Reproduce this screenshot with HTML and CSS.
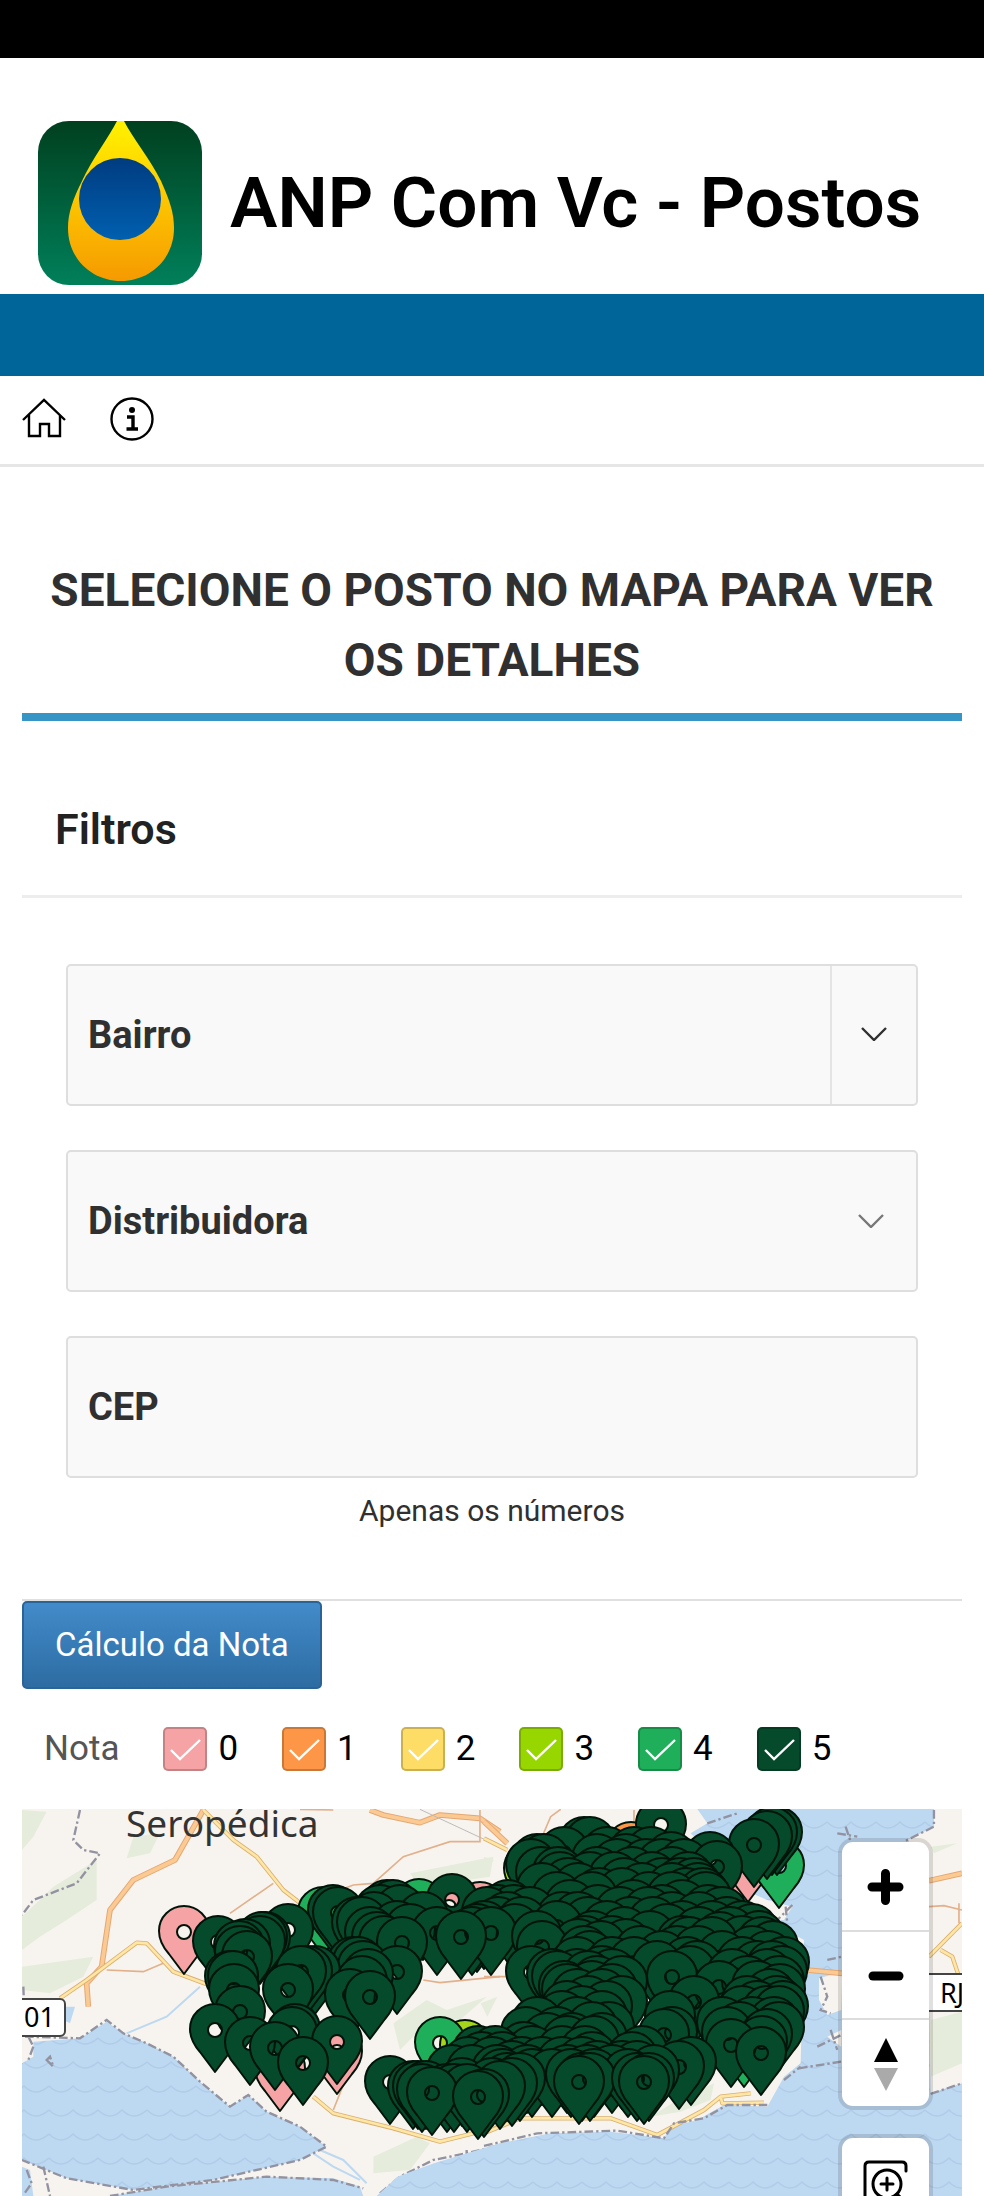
FILE: index.html
```
<!DOCTYPE html>
<html lang="pt-BR">
<head>
    <meta charset="UTF-8">
    <meta name="viewport" content="width=device-width, initial-scale=1.0">
    <title>ANP Com Vc - Postos</title>
    <link rel="stylesheet" href="styles.css">
</head>
<body>
    <div class="status-bar"></div>
    <header class="header">
        <svg class="logo" viewBox="0 0 164 164" aria-hidden="true">
            <defs>
                <linearGradient id="verde" x1="0" y1="0" x2="0" y2="1">
                    <stop offset="0" stop-color="#00401f"/>
                    <stop offset="1" stop-color="#00805a"/>
                </linearGradient>
                <linearGradient id="gota" x1="0" y1="0" x2="0" y2="1">
                    <stop offset="0" stop-color="#fff200"/>
                    <stop offset="0.25" stop-color="#ffdc00"/>
                    <stop offset="0.65" stop-color="#fbb800"/>
                    <stop offset="1" stop-color="#f59a00"/>
                </linearGradient>
                <linearGradient id="azul" x1="0" y1="0" x2="0" y2="1">
                    <stop offset="0" stop-color="#003c80"/>
                    <stop offset="1" stop-color="#0060b0"/>
                </linearGradient>
            </defs>
            <rect width="164" height="164" rx="31" fill="url(#verde)"/>
            <path d="M79 0 H86 C94 16 112 38 123 60 C132 80 136 92 136 107 C136 138 112 160 83 160 C54 160 30 138 30 107 C30 92 35 78 44 60 C54 38 71 16 79 0Z" fill="url(#gota)"/>
            <circle cx="82" cy="78" r="41" fill="url(#azul)"/>
        </svg>
        <h1>ANP Com Vc - Postos</h1>
    </header>
    <div class="blue-bar"></div>
    <nav class="nav">
        <a href="#" aria-label="Início">
            <svg viewBox="0 0 44 44"><path d="M1 22 L22 2 L43 22 M7 17 V38 H18 V26 H27 V38 H38 V17"/></svg>
        </a>
        <a href="#" aria-label="Informações">
            <svg viewBox="0 0 44 44"><circle cx="22" cy="21" r="20.5"/><circle class="dot" cx="22" cy="12" r="3"/><path class="i-body" d="M17 19 H23 V31 M16.5 31 H28"/></svg>
        </a>
    </nav>
    <main>
        <h2 class="title">SELECIONE O POSTO NO MAPA PARA VER OS DETALHES</h2>

        <section class="filters">
            <h3>Filtros</h3>
            <form>
                <div class="field">
                    <label for="bairro">Bairro</label>
                    <input type="text" id="bairro">
                    <button type="button" class="lov" aria-label="Abrir lista de bairros">
                        <svg class="chevron" viewBox="0 0 26 14"><path d="M1 1 L13 13 L25 1"/></svg>
                    </button>
                </div>
                <div class="field">
                    <label for="distribuidora">Distribuidora</label>
                    <select id="distribuidora"><option></option></select>
                    <svg class="chevron light" viewBox="0 0 26 14"><path d="M1 1 L13 13 L25 1"/></svg>
                </div>
                <div class="field">
                    <label for="cep">CEP</label>
                    <input type="text" id="cep" inputmode="numeric" aria-describedby="cep-help">
                </div>
                <p class="help" id="cep-help">Apenas os números</p>
            </form>
        </section>

        <button type="button" class="btn">Cálculo da Nota</button>

        <div class="notas" role="group" aria-labelledby="nota">
            <span id="nota">Nota</span>
            <label><input type="checkbox" class="n0" checked>0</label>
            <label><input type="checkbox" class="n1" checked>1</label>
            <label><input type="checkbox" class="n2" checked>2</label>
            <label><input type="checkbox" class="n3" checked>3</label>
            <label><input type="checkbox" class="n4" checked>4</label>
            <label><input type="checkbox" class="n5" checked>5</label>
        </div>

        <div class="map">
            <svg class="map-canvas" viewBox="0 0 940 387" preserveAspectRatio="xMidYMin slice">
                <defs>
                    <pattern id="agua" width="49" height="24" patternUnits="userSpaceOnUse" patternTransform="scale(3)">
                        <rect width="49" height="24" fill="#bdd8f1"/>
                        <path d="M0 8 Q6 14 12 14 Q18 14 24 8 Q30 14 36 14 Q42 14 49 8" fill="none" stroke="#b0cce8" stroke-width="1.5"/>
                    </pattern>
                    <path id="pin" fill-rule="evenodd" d="M0 42 L-15 22 C-22 14 -25 7 -25 -1 A25 25 0 0 1 25 -1 C25 7 22 14 15 22Z M7 0 A7 7 0 1 0 -7 0 A7 7 0 1 0 7 0Z"/>
                </defs>
                <rect width="940" height="387" fill="#f7f4ef"/>

                <!-- oeste -->
                <g transform="translate(-22 -19) scale(0.3333)">
                    <g class="mata">
                        <path d="M66 60 L140 65 100 140 66 180Z M400 140 L480 130 450 190 380 205Z"/>
                        <path d="M66 380 L160 290 290 210 290 330 200 390 120 440 66 480Z M66 530 L280 500 250 560 150 610 66 600Z"/>
                        <path d="M1230 250 L1480 200 1470 260 1260 290Z M1180 700 L1280 630 1340 660 1460 620 1380 690 1300 680 1200 780Z"/>
                        <path d="M1120 1100 L1250 1040 1290 1060 1230 1140 1120 1150Z"/>
                    </g>
                    <path fill="url(#agua)" d="M100 755 L240 745 320 695 370 730 440 760 520 800 600 875 690 950 745 915 800 965 900 1010 980 1070 900 1110 640 1170 400 1200 200 1165 66 1110 66 820 100 800Z"/>
                    <path fill="#bdd8f1" d="M66 1130 L90 1140 100 1218 66 1218Z M330 1218 L500 1190 800 1160 1000 1165 1080 1190 1090 1218Z M190 650 L225 650 210 700 190 690Z"/>
                    <g class="rio"><path d="M600 590 L500 680 380 730 M960 1080 L1030 1110 1100 1180 M940 1090 L1000 1130 1080 1170"/></g>
                    <g class="via-borda">
                        <path d="M610 60 L525 210 400 270 330 360 305 530 260 580 265 650"/>
                        <path d="M1110 60 L1150 75 1260 98 1320 75 1440 85 1500 125"/>
                    </g>
                    <g class="via">
                        <path d="M610 60 L525 210 400 270 330 360 305 530 260 580 265 650"/>
                        <path d="M1110 60 L1150 75 1260 98 1320 75 1440 85 1500 125"/>
                    </g>
                    <g class="rua-borda">
                        <path d="M180 625 L260 570 410 458 440 460 520 545 640 590 M610 60 L700 150 770 200 850 300 940 370"/>
                        <path d="M940 920 L1000 970 1180 1015 1320 1055 1500 1010"/>
                    </g>
                    <g class="rua">
                        <path d="M180 625 L260 570 410 458 440 460 520 545 640 590 M610 60 L700 150 770 200 850 300 940 370"/>
                        <path d="M940 920 L1000 970 1180 1015 1320 1055 1500 1010"/>
                    </g>
                    <path class="fina" d="M690 370 L820 280 M320 540 L430 545 490 520 M1020 300 L1060 285 1120 280 1210 200 1350 155 1440 155 1440 60 M1270 570 L1320 578 1500 560 M1000 960 L1040 860 M900 58 L1000 60"/>
                    <path class="trilho" d="M1260 58 L1500 170"/>
                    <g class="limite">
                        <path d="M240 60 L220 150 250 180 300 190 230 280 100 330 66 375 M70 590 L75 720 100 770 M75 740 L240 745 320 690 370 730 440 760 520 800 600 875 690 950 745 915 800 965 900 1010 980 1070 900 1110 640 1170 400 1200 200 1165 66 1110"/>
                        <path d="M330 1218 L500 1190 800 1160 1000 1170 1090 1195 M1140 1210 L1200 1160 1300 1110 1400 1090 1500 1065 M1400 1080 V1130 M130 1130 L150 1218 M80 1140 L95 1180 70 1215 M100 770 L85 810 M140 810 L160 830 150 800Z"/>
                    </g>
                </g>

                <!-- baía e litoral leste -->
                <g transform="translate(462 -19) scale(0.3333)">
                    <path class="mata" d="M-10 640 L40 620 10 680Z M0 200 L30 210 0 250Z"/>
                    <path fill="url(#agua)" d="M640 57 L1350 57 1350 110 1270 150 1330 200 1340 910 1434 880 1434 1218 -322 1218 -260 1160 -150 1120 48 1060 200 1030 380 1025 540 1045 560 1010 640 990 720 945 850 950 900 860 950 820 960 450 870 400 780 360 780 300 620 130 670 100Z"/>
                    <path class="mata" d="M1340 170 L1420 160 1350 190Z M1340 690 L1434 665 1434 820 1340 860Z M500 980 L580 930 690 880 680 930 590 965Z"/>
                    <path fill="#f7f4ef" d="M780 300 L850 330 925 350 900 390 850 395 780 360Z M1005 565 L1075 545 1072 660 1030 675 1005 630Z M1030 740 L1072 720 1072 770Z"/>
                    <g class="via-borda"><path d="M0 95 L70 160 M970 540 L1075 550 M1335 272 L1434 250"/></g>
                    <g class="via"><path d="M0 95 L70 160 M970 540 L1075 550 M1335 272 L1434 250"/></g>
                    <g class="rua-borda"><path d="M0 145 L70 180 M0 1030 L110 985 380 985 520 1035 660 960 710 920 800 910 M710 920 L715 940 840 938 M1335 500 L1434 400 M1370 480 L1405 500 1425 560"/></g>
                    <g class="rua"><path d="M0 145 L70 180 M0 1030 L110 985 380 985 520 1035 660 960 710 920 800 910 M710 920 L715 940 840 938 M1335 500 L1434 400 M1370 480 L1405 500 1425 560"/></g>
                    <path class="fina" d="M0 560 H90 M170 150 L200 80 230 58 M450 60 V110 M1335 350 L1380 347 1434 360 M1425 340 V400"/>
                    <path class="limite" d="M0 1068 L160 1030 400 1022 540 1045 570 1000 660 985 730 945 850 945 M670 100 L760 70 M1350 60 V110 L1260 155 M1060 130 L1120 140 M1085 110 L1100 155 M780 360 L850 380 870 400 930 340 M905 350 L910 400 M1010 560 L1030 620 1010 660 1040 670 M1030 510 L1075 500 M1000 770 L1072 735 M1040 720 L1060 780 M945 835 L1072 815 M900 870 L950 830 M1340 912 L1434 880"/>
                </g>

                <text class="cidade" x="104" y="28">Seropédica</text>
                <g class="placa">
                    <rect x="-8" y="190" width="51" height="37" rx="5"/>
                    <text x="2" y="218">01</text>
                    <rect x="884" y="165" width="80" height="37"/>
                    <text x="918" y="194">RJ</text>
                </g>
                <g id="pins"></g>
            </svg>

            <div class="controls">
                <div class="group">
                    <button type="button" aria-label="Aumentar zoom"><svg viewBox="0 0 87 87"><path class="grosso" d="M30 44 H57 M43.500 30.500 V57.500"/></svg></button>
                    <button type="button" aria-label="Diminuir zoom"><svg viewBox="0 0 87 87"><path class="grosso" d="M31 44 H57"/></svg></button>
                    <button type="button" aria-label="Orientar para o norte"><svg viewBox="0 0 87 87"><path d="M44 18 L56 42 H32Z"/><path fill="#aaa" d="M32 48 H56 L44 71Z"/></svg></button>
                </div>
                <div class="group">
                    <button type="button" aria-label="Zoom por retângulo"><svg viewBox="0 0 87 87"><g class="traco"><path d="M64 32 V27 Q64 23 60 23 H27 Q23 23 23 27 V60 Q23 64 27 64 H32"/><circle cx="45" cy="45" r="14"/><path d="M39 45 H51 M45 39 V51 M55 55 L66 66"/></g></svg></button>
                </div>
            </div>
        </div>
    </main>
    <script src="script.js"></script>
</body>
</html>
```
FILE: styles.css
```
* {
    box-sizing: border-box;
}
body {
    margin: 0;
    background: #fff;
    color: #000;
    font-family: Roboto, "Liberation Sans", sans-serif;
    overflow-x: hidden;
}
h1, h2, h3, p {
    margin: 0;
}
button, input, select {
    font-family: inherit;
}
.status-bar {
    height: 58px;
    background: #000;
}
.header {
    display: flex;
    align-items: center;
    gap: 28px;
    padding: 63px 38px 9px;
}
.logo {
    width: 164px;
    height: 164px;
    flex: none;
}
.header h1 {
    font-size: 71px;
    line-height: 84px;
    font-weight: 600;
}
.blue-bar {
    height: 82px;
    background: #006699;
}
.nav {
    display: flex;
    gap: 44px;
    padding: 22px;
    border-bottom: 3px solid #e6e6e6;
}
.nav a {
    height: 44px;
}
.nav svg {
    width: 44px;
    height: 44px;
    fill: none;
    stroke: #000;
    stroke-width: 2.4;
    overflow: visible;
}
.nav .dot {
    fill: #000;
    stroke: none;
}
.nav .i-body {
    stroke-width: 3.4;
}
main {
    padding: 0 22px;
}
.title {
    padding: 88px 0 18px;
    border-bottom: 8px solid #3695c4;
    color: #303030;
    font-size: 46px;
    line-height: 70px;
    font-weight: 700;
    text-align: center;
}

/* filtros */
.filters {
    border-bottom: 2px solid #e0e0e0;
}
.filters h3 {
    padding: 80px 33px 38px;
    border-bottom: 3px solid #ededed;
    color: #222;
    font-size: 43px;
    line-height: 56px;
    font-weight: 600;
}
.filters form {
    display: flex;
    flex-direction: column;
    gap: 44px;
    padding: 66px 44px 67px;
}
.field {
    display: flex;
    align-items: center;
    height: 142px;
    padding-left: 20px;
    border: 2px solid #dedede;
    border-radius: 5px;
    background: #f9f9f9;
}
.field label {
    color: #303030;
    font-size: 38px;
    line-height: 48px;
    font-weight: 700;
}
.field input, .field select {
    flex: 1;
    min-width: 0;
    height: 100%;
    margin-left: 16px;
    border: 0;
    outline: 0;
    background: none;
    font-size: 38px;
    appearance: none;
}
.chevron {
    width: 26px;
    height: 14px;
    fill: none;
    stroke: #303030;
    stroke-width: 2.4;
}
.chevron.light {
    margin-right: 32px;
    stroke: #777;
}
.lov {
    width: 86px;
    height: 100%;
    border: 0;
    border-left: 2px solid #e4e4e4;
    background: none;
}
.help {
    margin-top: -32px;
    color: #303030;
    font-size: 30px;
    line-height: 42px;
    text-align: center;
}

.btn {
    display: block;
    padding: 20px 31px;
    border: 2px solid #2a6496;
    border-radius: 5px;
    background: linear-gradient(#428bca, #2d6ca2);
    color: #fff;
    font-size: 33px;
    line-height: 44px;
}

/* legenda das notas */
.notas {
    display: flex;
    align-items: center;
    gap: 44px;
    height: 120px;
    padding-left: 22px;
    font-size: 35px;
    line-height: 44px;
}
#nota {
    color: #555;
}
.notas label {
    display: flex;
    align-items: center;
    gap: 11px;
}
.notas input {
    appearance: none;
    width: 44px;
    height: 44px;
    margin: 0;
    border: 2px solid rgba(0, 0, 0, 0.2);
    border-radius: 5px;
}
.notas input:checked {
    background-image: url("data:image/svg+xml,%3Csvg xmlns='http://www.w3.org/2000/svg' viewBox='0 0 40 40'%3E%3Cpath d='M6 21 L15 30 L35 11' fill='none' stroke='white' stroke-width='2.4'/%3E%3C/svg%3E");
}
.n0 { background-color: #f5a3a5; }
.n1 { background-color: #fd9647; }
.n2 { background-color: #fedd66; }
.n3 { background-color: #98d600; }
.n4 { background-color: #1fae59; }
.n5 { background-color: #054a2b; }

/* mapa */
.map {
    position: relative;
    height: 387px;
    overflow: hidden;
}
.map-canvas {
    display: block;
    width: 100%;
    height: 100%;
}
.mata { fill: #e6ecdc; }
.rio { fill: none; stroke: #bdd8f1; stroke-width: 6; }
.via, .via-borda, .rua, .rua-borda { fill: none; stroke-linejoin: round; }
.via-borda { stroke: #e5a774; stroke-width: 17; }
.via { stroke: #fbca93; stroke-width: 11; }
.rua-borda { stroke: #dcae6c; stroke-width: 13; }
.rua { stroke: #fde6a6; stroke-width: 8; }
.fina { fill: none; stroke: #e3b08c; stroke-width: 5; }
.trilho { fill: none; stroke: #bbb; stroke-width: 3; }
.limite {
    fill: none;
    stroke: #9292a0;
    stroke-width: 7;
    stroke-dasharray: 26 9 7 9;
}
.cidade {
    fill: #333;
    font-family: "Noto Sans", sans-serif;
    font-size: 37px;
}
.placa rect {
    fill: #fff;
    stroke: #444;
    stroke-width: 2;
}
.placa text {
    font-family: "Noto Sans", sans-serif;
    font-size: 27px;
}
#pins {
    stroke: #001409;
    stroke-width: 2;
    stroke-linejoin: round;
}
.controls {
    position: absolute;
    top: 33px;
    right: 33px;
    display: flex;
    flex-direction: column;
    gap: 32px;
}
.group {
    width: 87px;
    border-radius: 11px;
    background: #fff;
    box-shadow: 0 0 0 4px rgba(0, 0, 0, 0.12);
    overflow: hidden;
}
.group button {
    display: block;
    width: 100%;
    height: 88px;
    padding: 0;
    border: 0;
    background: none;
}
.group button + button {
    border-top: 2px solid #ddd;
}
.group svg {
    display: block;
    width: 87px;
    height: 87px;
}
.grosso {
    stroke: #000;
    stroke-width: 9;
    stroke-linecap: round;
}
.traco {
    fill: none;
    stroke: #000;
    stroke-width: 3;
    stroke-linecap: round;
}
```
FILE: script.js
```
const cores = {
    0: '#f5a3a5',
    1: '#fd9647',
    3: '#a5d61a',
    4: '#1fae59',
    5: '#054a2b'
};

// [nota, x, y] do centro de cada pino
const postos = [
    [0, 162, 123], [0, 458, 99], [0, 427, 98], [0, 258, 260], [0, 315, 243],
    [0, 696, 90], [0, 726, 51], [1, 609, 39], [3, 507, 60], [3, 443, 237],
    [4, 301, 104], [4, 397, 96], [4, 418, 234], [4, 757, 57], [4, 594, 170], [4, 722, 236]
];

// nota 5: [y, x, x, ...]
const linhas = [
    [16, 639], [24, 755, 750], [28, 745], [34, 562, 568], [36, 732], [44, 542, 585, 612, 629], [49, 649, 688],
    [51, 515, 522, 575, 604], [56, 509, 595, 624, 640, 662], [58, 695],
    [64, 519, 536, 575, 610, 650], [69, 538, 568, 592, 630, 666], [75, 546, 602, 640, 658, 672],
    [80, 520, 556, 620, 650, 676], [85, 577, 600, 664, 681], [89, 535, 570, 627, 650, 684],
    [91, 430], [97, 365, 371, 486, 548, 611, 660], [102, 311, 358, 378, 475, 492, 576, 640, 686],
    [104, 316, 465, 508, 598, 626, 700], [109, 401, 352, 485, 540, 556, 650, 677],
    [114, 335, 340, 476, 500, 566, 608, 631, 705], [118, 375, 462, 535, 585, 660, 690, 720],
    [121, 266, 388, 455, 493, 645, 730], [124, 348, 415, 450, 469, 602, 677, 708], [128, 439, 515, 571, 628, 737],
    [129, 243, 240, 355, 698], [133, 196, 238, 362, 563, 590, 660, 720], [134, 380, 667, 690, 740],
    [136, 223, 556, 604], [138, 217, 520, 579, 751], [143, 218, 562, 618, 655, 676, 730], [148, 225, 568, 640, 700, 746],
    [154, 331, 336, 555, 590, 612, 665, 720, 762], [158, 341, 635, 675, 735, 750], [163, 293, 285, 279, 375, 509, 580, 668, 760],
    [166, 346, 530, 555, 590, 710, 745], [168, 208, 211, 535, 566, 650], [173, 340, 575, 600, 725, 757],
    [178, 697, 542, 570, 735], [181, 266, 212, 590, 545, 758], [186, 328, 555, 580, 748], [188, 348],
    [193, 672, 566, 600, 725, 755], [198, 545, 585, 735, 761], [203, 218, 560, 720, 745, 757], [208, 540, 580, 648],
    [214, 515, 555, 700, 730, 752], [219, 587, 570, 757, 718], [221, 193, 273], [224, 270, 504, 535, 650, 705],
    [226, 642, 745], [230, 525, 550, 580], [233, 315, 545, 572, 740], [234, 228], [236, 709], [239, 253, 502],
    [243, 456, 473, 510, 540, 563, 620], [244, 739], [249, 460, 480, 570, 610], [254, 281, 446, 470, 500, 520, 540, 560, 669],
    [258, 657, 490, 575, 600, 615], [262, 430, 450, 475, 505, 545, 565, 590, 632], [266, 480, 510, 530, 549, 572, 606],
    [270, 485, 498, 560, 568, 615, 627], [273, 368, 557, 622], [275, 440, 470, 490], [278, 391, 396, 404, 478],
    [281, 425, 432, 400, 445], [284, 410], [286, 462], [288, 456]
];

const grupo = document.getElementById('pins');

function addPin(nota, x, y) {
    const pin = document.createElementNS('http://www.w3.org/2000/svg', 'use');
    pin.setAttribute('href', '#pin');
    pin.setAttribute('x', x);
    pin.setAttribute('y', y);
    pin.setAttribute('fill', cores[nota]);
    grupo.appendChild(pin);
}

postos.forEach(([nota, x, y]) => addPin(nota, x, y));
linhas.forEach(([y, ...xs]) => xs.forEach(x => addPin(5, x, y)));
```
